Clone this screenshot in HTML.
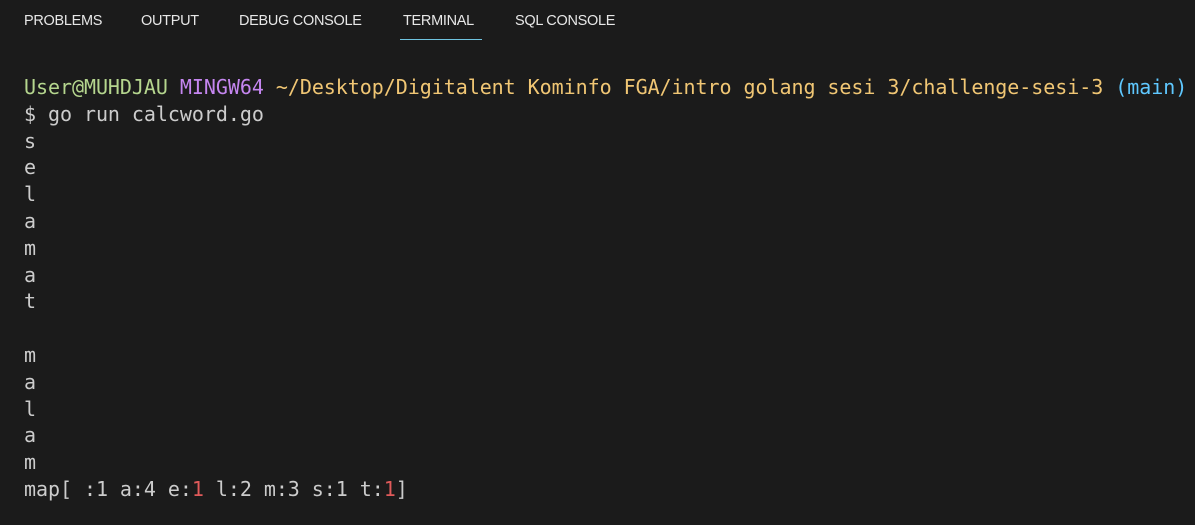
<!DOCTYPE html>
<html><head><meta charset="utf-8"><style>
html,body{margin:0;padding:0;background:#1b1b1b;width:1195px;height:525px;overflow:hidden}
.tabs{position:absolute;top:0;left:0;height:42px;width:1195px}
.tab{position:absolute;top:13px;font:14.5px "Liberation Sans",sans-serif;color:#e7e7e7;white-space:nowrap;letter-spacing:-0.3px}
.ul{position:absolute;left:400px;top:39px;width:82px;height:1px;background:#6fc3df}
.term{position:absolute;left:24px;top:74px;font:20px "DejaVu Sans Mono","Liberation Mono",monospace;letter-spacing:-0.05px;line-height:26.8px;color:#cccccc;white-space:pre}
.g{color:#b5d68e}.p{color:#c586f0}.y{color:#f0c674}.c{color:#5fc8ff}.r{color:#e05a5a}
</style></head><body>
<div class="tabs">
<span class="tab" style="left:24px">PROBLEMS</span>
<span class="tab" style="left:141px">OUTPUT</span>
<span class="tab" style="left:239px">DEBUG CONSOLE</span>
<span class="tab" style="left:403px">TERMINAL</span>
<span class="tab" style="left:515px">SQL CONSOLE</span>
<div class="ul"></div>
</div>
<div class="term"><span class="g">User@MUHDJAU</span> <span class="p">MINGW64</span> <span class="y">~/Desktop/Digitalent Kominfo FGA/intro golang sesi 3/challenge-sesi-3</span> <span class="c">(main)</span>
$ go run calcword.go
s
e
l
a
m
a
t
 
m
a
l
a
m
map[ :1 a:4 e:<span class="r">1</span> l:2 m:3 s:1 t:<span class="r">1</span>]</div>
</body></html>
